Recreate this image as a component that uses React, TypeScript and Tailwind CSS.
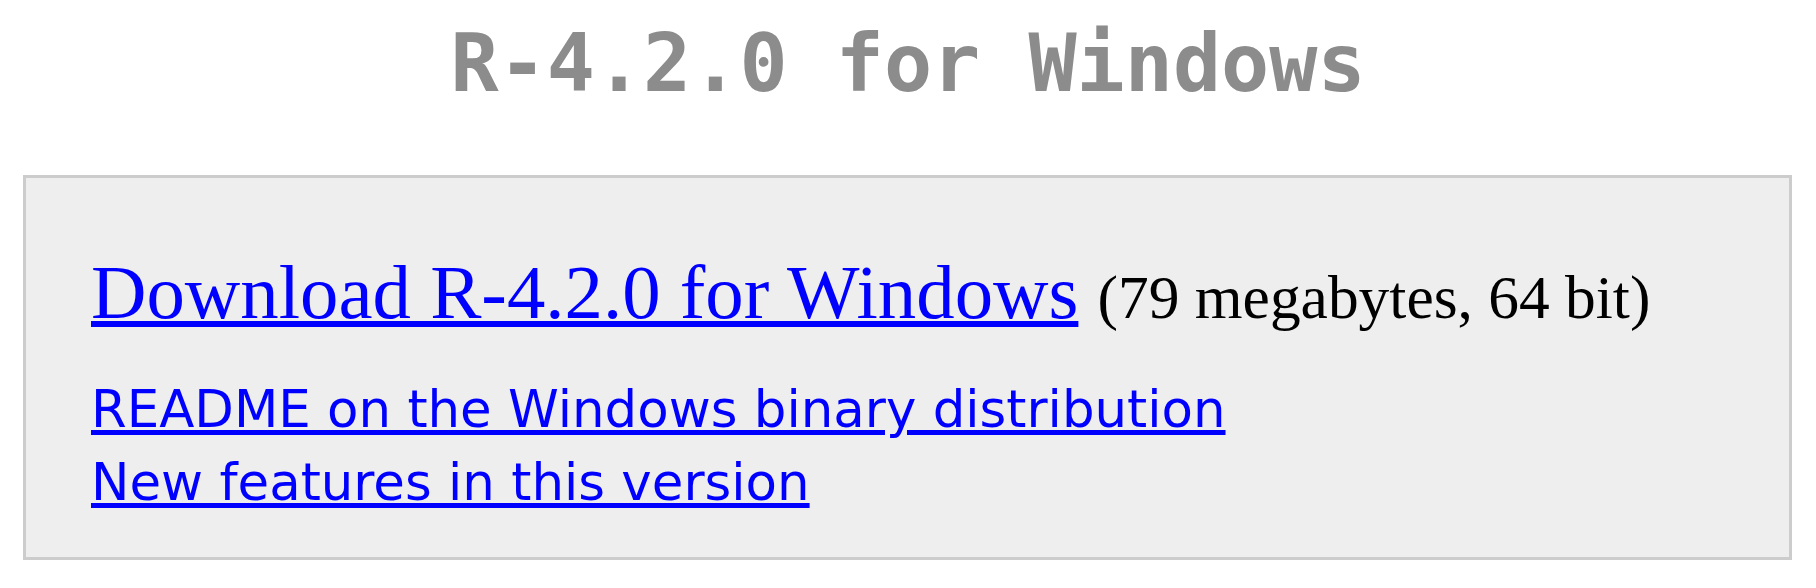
export default function App() {
  return (
    <div className="w-[1816px] h-[588px] bg-white overflow-hidden">
      <h1 className="pt-[24px] text-center text-[80px] leading-[80px] font-bold text-[#8c8c8c] font-['DejaVu_Sans_Mono',monospace]">
        R-4.2.0 for Windows
      </h1>

      <div className="mt-[71px] ml-[23px] w-[1769px] border-[3px] border-[#cccccc] bg-[#eeeeee] pl-[65px] pt-[75px] pb-[38px]">
        <p className="h-[80px] text-[76.8px] leading-[80px] whitespace-nowrap font-['Liberation_Serif',serif]">
          <a href="#" className="text-[#0000ff] underline decoration-[6px] underline-offset-[3px]">
            Download R-4.2.0 for Windows
          </a>{' '}
          <span className="text-[61.44px] leading-none text-black">(79 megabytes, 64 bit)</span>
        </p>

        <div className="mt-[40px] flex flex-col text-[51.4px] leading-[73px] font-['DejaVu_Sans',sans-serif]">
          <a href="#" className="self-start text-[#0000ff] underline decoration-[5px] underline-offset-[3px]">
            README on the Windows binary distribution
          </a>
          <a href="#" className="self-start text-[#0000ff] underline decoration-[5px] underline-offset-[3px]">
            New features in this version
          </a>
        </div>
      </div>
    </div>
  );
}
